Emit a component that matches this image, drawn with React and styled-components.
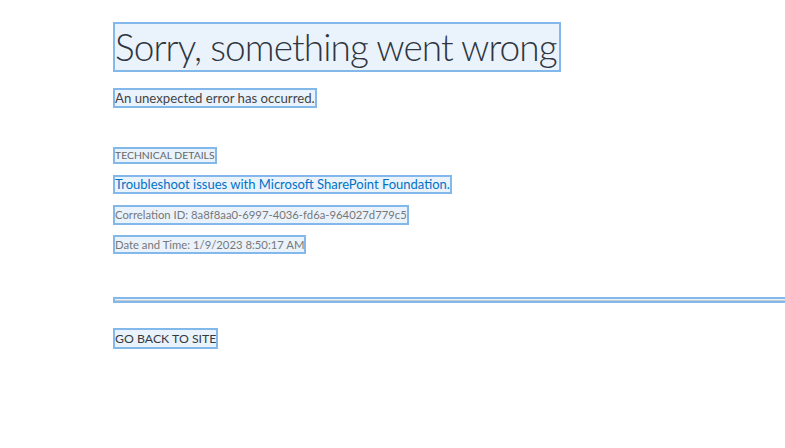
import React from "react";
import styled, { createGlobalStyle, css } from "styled-components";

const Global = createGlobalStyle`
  html, body { margin: 0; padding: 0; background: #ffffff; }
  body { font-family: Lato, "Open Sans", sans-serif; }
`;

const highlight = css`
  background: #eaf3fc;
  border: 2px solid #82b9ea;
  box-sizing: border-box;
`;

const Page = styled.main`
  display: flex;
  flex-direction: column;
  align-items: flex-start;
  padding: 22px 0 0 113px;
  width: 785px;
  height: 448px;
  box-sizing: border-box;
  overflow: hidden;
`;

const Title = styled.h1`
  ${highlight};
  margin: 0;
  padding-right: 2px;
  font-family: Lato, "Open Sans", sans-serif;
  font-weight: 300;
  font-size: 37px;
  letter-spacing: -0.92px;
  line-height: 46px;
  color: #2f3640;
  white-space: nowrap;
`;

const Text = styled.div`
  ${highlight};
  margin-top: ${(p) => p.$gap}px;
  font-size: ${(p) => p.$size}px;
  line-height: ${(p) => p.$lh}px;
  color: ${(p) => p.$color};
  white-space: nowrap;
`;

const Link = styled.a`
  ${highlight};
  display: block;
  margin-top: 11px;
  font-size: 13px;
  line-height: 15px;
  color: #0072c6;
  text-decoration: none;
  white-space: nowrap;
`;

const Separator = styled.div`
  ${highlight};
  margin-top: 43px;
  align-self: stretch;
  margin-right: -20px;
  height: 6px;
  border-right: none;
  display: flex;
  flex-direction: column;
  justify-content: center;
`;

const SeparatorLine = styled.div`
  height: 1px;
  background: #c8c8c8;
`;

const BackButton = styled.a`
  ${highlight};
  display: block;
  margin-top: 25px;
  font-size: 12.3px;
  line-height: 17px;
  color: #333a44;
  text-decoration: none;
  white-space: nowrap;
`;

export default function App() {
  return (
    <>
      <Global />
      <Page>
        <Title>Sorry, something went wrong</Title>
        <Text $gap={16} $size={13.2} $lh={16} $color="#444">
          An unexpected error has occurred.
        </Text>
        <Text $gap={39} $size={10.4} $lh={13} $color="#666">
          TECHNICAL DETAILS
        </Text>
        <Link href="#">Troubleshoot issues with Microsoft SharePoint Foundation.</Link>
        <Text $gap={11} $size={11.3} $lh={16} $color="#777">
          Correlation ID: 8a8f8aa0-6997-4036-fd6a-964027d779c5
        </Text>
        <Text $gap={10} $size={11.3} $lh={15} $color="#777">
          Date and Time: 1/9/2023 8:50:17 AM
        </Text>
        <Separator>
          <SeparatorLine />
        </Separator>
        <BackButton href="#">GO BACK TO SITE</BackButton>
      </Page>
    </>
  );
}
